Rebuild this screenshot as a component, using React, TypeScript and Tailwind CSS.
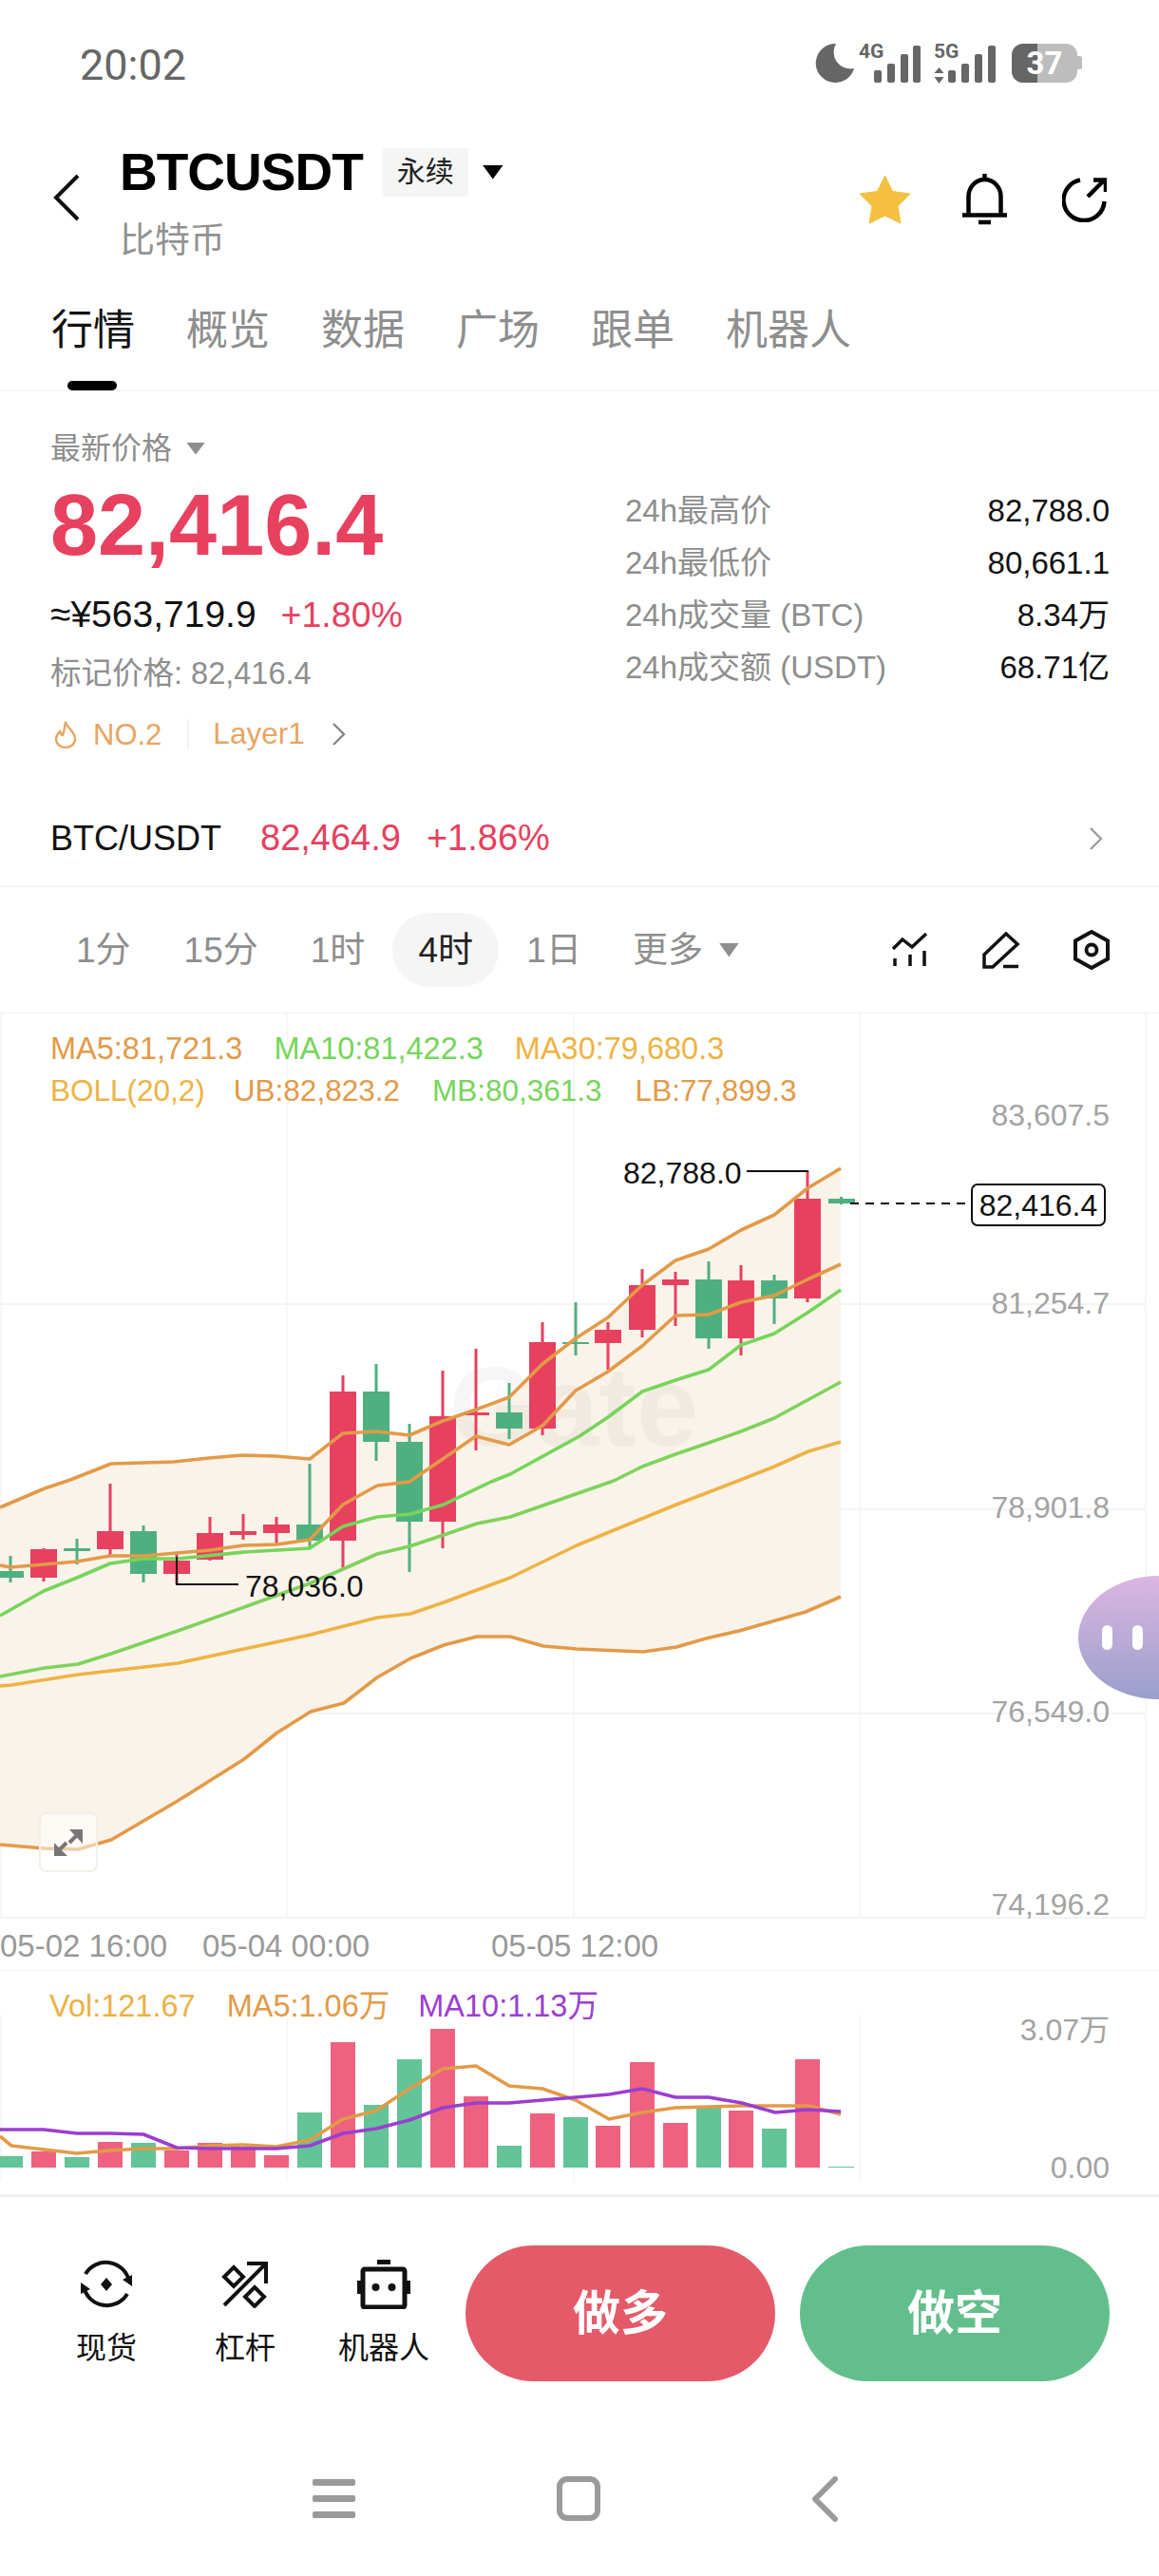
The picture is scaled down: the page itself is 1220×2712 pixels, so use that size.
import React from "react";

type Pt = [number, number];
// x, wick top, wick bottom, body top, body bottom, up/down
type Candle = [number, number, number, number, number, "r" | "g"];

const candles: Candle[] = [
  [11, 1639, 1667, 1655, 1662, "g"], [46, 1631, 1666, 1632, 1662, "r"], [81, 1621, 1648, 1631, 1634, "g"],
  [116, 1563, 1638, 1613, 1632, "r"], [151, 1607, 1667, 1613, 1658, "g"], [186, 1637, 1669, 1644, 1658, "r"],
  [221, 1598, 1644, 1615, 1643, "r"], [256, 1595, 1622, 1613, 1617, "r"], [291, 1598, 1626, 1606, 1615, "r"],
  [326, 1542, 1630, 1606, 1623, "g"], [361, 1449, 1652, 1466, 1623, "r"], [396, 1437, 1539, 1466, 1519, "g"],
  [431, 1500, 1656, 1519, 1603, "g"], [466, 1444, 1631, 1492, 1603, "r"], [501, 1421, 1528, 1488, 1491, "r"],
  [536, 1457, 1516, 1488, 1505, "g"], [571, 1393, 1512, 1414, 1505, "r"], [606, 1372, 1428, 1414, 1416, "g"],
  [640, 1393, 1443, 1401, 1415, "r"], [676, 1337, 1409, 1354, 1401, "r"], [711, 1340, 1397, 1348, 1354, "r"],
  [746, 1329, 1421, 1348, 1410, "g"], [780, 1333, 1428, 1349, 1410, "r"], [815, 1343, 1395, 1349, 1368, "g"],
  [850, 1234, 1372, 1263, 1368, "r"],
];

const upper: Pt[] = [[0, 1588], [47, 1568], [74, 1559], [117, 1542], [183, 1540], [220, 1536], [255, 1533], [290, 1534], [326, 1537], [361, 1510], [396, 1508], [431, 1512], [466, 1497], [501, 1485], [536, 1472], [571, 1437], [606, 1410], [640, 1388], [676, 1354], [711, 1328], [746, 1316], [780, 1296], [815, 1280], [850, 1252], [885, 1231]];
const lower: Pt[] = [[0, 1943], [47, 1947], [82, 1948], [117, 1938], [187, 1897], [257, 1853], [292, 1825], [327, 1803], [362, 1794], [397, 1767], [432, 1747], [467, 1733], [502, 1724], [537, 1724], [572, 1734], [607, 1737], [677, 1740], [712, 1735], [743, 1726], [778, 1718], [813, 1708], [848, 1698], [885, 1682]];
const ma5: Pt[] = [[0, 1649], [11, 1651], [46, 1648], [81, 1645], [116, 1639], [151, 1639], [186, 1636], [221, 1633], [256, 1628], [291, 1627], [326, 1622], [361, 1585], [397, 1565], [431, 1561], [466, 1537], [501, 1513], [536, 1522], [571, 1502], [606, 1465], [640, 1445], [676, 1418], [711, 1386], [746, 1385], [780, 1372], [815, 1365], [850, 1348], [885, 1332]];
const ma10: Pt[] = [[0, 1702], [46, 1676], [81, 1662], [116, 1647], [151, 1642], [187, 1642], [257, 1635], [326, 1631], [361, 1608], [397, 1598], [432, 1595], [467, 1585], [517, 1561], [537, 1553], [610, 1513], [640, 1493], [676, 1466], [711, 1454], [746, 1443], [780, 1417], [815, 1405], [850, 1383], [885, 1359]];
const mb: Pt[] = [[0, 1766], [47, 1757], [82, 1753], [117, 1742], [187, 1718], [257, 1693], [326, 1668], [361, 1653], [397, 1637], [431, 1629], [467, 1617], [502, 1605], [537, 1598], [646, 1560], [676, 1545], [711, 1532], [746, 1520], [780, 1508], [815, 1494], [885, 1456]];
const ma30: Pt[] = [[0, 1776], [12, 1775], [82, 1764], [117, 1760], [187, 1752], [257, 1737], [327, 1722], [362, 1713], [397, 1704], [432, 1700], [467, 1688], [537, 1662], [607, 1628], [712, 1585], [777, 1560], [815, 1545], [851, 1529], [885, 1519]];

// volume bars: x, top, colour
const volBars: [number, number, "r" | "g"][] = [
  [11, 2271, "g"], [46, 2266, "r"], [81, 2272, "g"], [116, 2256, "r"], [151, 2257, "g"], [186, 2265, "r"], [221, 2257, "r"],
  [256, 2261, "r"], [291, 2270, "r"], [326, 2225, "g"], [361, 2151, "r"], [396, 2217, "g"], [431, 2169, "g"], [466, 2137, "r"],
  [501, 2208, "r"], [536, 2260, "g"], [571, 2226, "r"], [606, 2230, "g"], [640, 2239, "r"], [676, 2172, "r"], [711, 2236, "r"],
  [746, 2220, "g"], [780, 2223, "r"], [815, 2242, "g"], [850, 2169, "r"],
];
const volMa5: Pt[] = [[0, 2250], [12, 2260], [46, 2264], [81, 2268], [116, 2265], [151, 2263], [186, 2263], [221, 2260], [256, 2259], [291, 2261], [326, 2254], [361, 2232], [396, 2223], [431, 2200], [466, 2179], [501, 2176], [536, 2197], [571, 2200], [606, 2212], [641, 2232], [676, 2225], [711, 2220], [746, 2219], [781, 2218], [816, 2218], [851, 2218], [885, 2227]];
const volMa10: Pt[] = [[0, 2243], [46, 2243], [81, 2247], [116, 2247], [151, 2248], [186, 2262], [221, 2263], [256, 2263], [291, 2263], [326, 2260], [361, 2247], [396, 2242], [431, 2233], [466, 2220], [501, 2215], [536, 2215], [571, 2212], [606, 2209], [641, 2206], [676, 2200], [711, 2209], [746, 2209], [781, 2215], [816, 2225], [851, 2222], [885, 2224]];

const pts = (l: Pt[]) => l.map((p) => p.join(",")).join(" ");
const red = "#e8405f";
const green = "#4fb07f";

function Line({ data, color, width = 3.6 }: { data: Pt[]; color: string; width?: number }) {
  return <polyline points={pts(data)} fill="none" stroke={color} strokeWidth={width} strokeLinejoin="round" />;
}

function Signal({ label, arrows }: { label: string; arrows?: boolean }) {
  return (
    <svg width="66" height="50" viewBox="0 -6 66 50" className="-mt-[6px] block">
      <text x="0" y="17" fontSize="21" fontWeight="700" fontFamily="Roboto, sans-serif" fill="#666">{label}</text>
      {arrows && <path d="M5.5 27 L10.5 33 H0.5 Z M5.5 44 L0.5 37 H10.5 Z" fill="#666" />}
      <rect x={arrows ? 15 : 16} y="30" width="8" height="13" rx="2" fill="#666" />
      <rect x={arrows ? 29 : 30} y="23" width="8" height="20" rx="2" fill="#666" />
      <rect x={arrows ? 43 : 44} y="13" width="8" height="30" rx="2" fill="#666" />
      <rect x={arrows ? 57 : 57} y="4" width="8" height="39" rx="2" fill="#666" />
    </svg>
  );
}

function StatusBar() {
  return (
    <div className="flex h-[136px] items-center justify-between pl-[84px] pr-[81px]">
      <span className="text-[45px] leading-none text-[#666] [font-family:Roboto,sans-serif]">20:02</span>
      <div className="-mt-[4px] flex items-center">
        <svg width="42" height="42" viewBox="0 0 42 42" className="block">
          <path d="M22 1 A20.5 20.5 0 1 0 41 27 A17.5 17.5 0 0 1 22 1 Z" fill="#666" />
        </svg>
        <div className="ml-[4px]"><Signal label="4G" /></div>
        <div className="ml-[13px]"><Signal label="5G" arrows /></div>
        <div className="relative ml-[16px] h-[41px] w-[69px] overflow-hidden rounded-[12px] bg-[#bdbdbd]">
          <div className="h-full w-[27px] bg-[#666]" />
          <span className="absolute inset-0 flex items-center justify-center text-[33px] font-bold leading-none text-white [font-family:Roboto,sans-serif]">37</span>
        </div>
        <div className="h-[14px] w-[5px] rounded-r-[2px] bg-[#bdbdbd]" />
      </div>
    </div>
  );
}

function Header() {
  return (
    <div className="flex h-[144px] items-center pr-[55px]">
      <svg width="30" height="50" viewBox="0 0 30 50" className="ml-[55px] block">
        <path d="M27 2 L4 25 L27 48" fill="none" stroke="#111" strokeWidth="4" />
      </svg>
      <div className="ml-[41px] mt-[20px] self-start">
        <div className="flex h-[50px] items-center">
          <span className="text-[55px] font-bold leading-none tracking-[-1px] text-black">BTCUSDT</span>
          <span className="ml-[21px] flex h-[51px] w-[90px] items-center justify-center bg-[#f5f5f5] text-[30px] leading-none text-[#222]">永续</span>
          <div className="ml-[15px] h-[15px] w-[22px] bg-black [clip-path:polygon(0_0,100%_0,50%_100%)]" />
        </div>
        <div className="mt-[29px] text-[37px] leading-[38px] text-[#929292]">比特币</div>
      </div>
      <div className="ml-auto mt-[3px] flex items-center">
        <svg width="55" height="52" viewBox="0 0 55 52" className="block">
          <path d="M27.5 1 L35.5 17.5 L54 20 L41 33 L44 51 L27.5 43 L11 51 L14 33 L1 20 L19.5 17.5 Z" fill="#f5c040" stroke="#f5c040" strokeWidth="1" strokeLinejoin="round" />
        </svg>
        <svg width="47" height="54" viewBox="0 0 47 54" className="ml-[54px] block">
          <path d="M6.5 42 V24 A17 18 0 0 1 40.5 24 V42" fill="none" stroke="#000" strokeWidth="4.5" />
          <path d="M0 43.5 H47 M23.5 0 V6 M17 51 H30" fill="none" stroke="#000" strokeWidth="4.5" />
        </svg>
        <svg width="47" height="48" viewBox="0 0 47 48" className="ml-[58px] block">
          <path d="M19 3.5 A21.5 21.5 0 1 0 44.5 26" fill="none" stroke="#000" strokeWidth="4.5" />
          <path d="M27 21 L44 4 M33 3.5 H46 V16" fill="none" stroke="#000" strokeWidth="4.5" />
        </svg>
      </div>
    </div>
  );
}

function Tabs() {
  return (
    <div className="h-[132px] border-b border-[#f0f0f0] pl-[54px] pt-[46px]">
      <div className="flex gap-[54px] text-[44px] leading-[44px] text-[#8e8e8e]">
        <span className="text-[#111]">行情</span>
        <span>概览</span>
        <span>数据</span>
        <span>广场</span>
        <span>跟单</span>
        <span>机器人</span>
      </div>
      <div className="ml-[17px] mt-[31px] h-[10px] w-[52px] rounded-full bg-black" />
    </div>
  );
}

function StatRow({ label, value }: { label: string; value: string }) {
  return (
    <div className="mb-[15px] flex h-[40px] items-center justify-between text-[33px] leading-none">
      <span className="text-[#8e8e8e]">{label}</span>
      <span className="text-[#111]">{value}</span>
    </div>
  );
}

function Summary() {
  return (
    <div className="flex">
      <div className="w-[658px] pl-[53px] pt-[44px]">
        <div className="flex items-center text-[32px] leading-[32px] text-[#8e8e8e]">
          <span>最新价格</span>
          <div className="ml-[15px] h-[13px] w-[20px] bg-[#8e8e8e] [clip-path:polygon(0_0,100%_0,50%_100%)]" />
        </div>
        <div className="mt-[20px] text-[90px] font-bold leading-[90px] text-[#e8405f]">82,416.4</div>
        <div className="mt-[29px] flex items-center leading-[40px]">
          <span className="text-[39px] text-[#111]">≈¥563,719.9</span>
          <span className="ml-[26px] text-[37.5px] text-[#e8405f]">+1.80%</span>
        </div>
        <div className="mt-[26px] text-[32.5px] leading-[32px] text-[#8e8e8e]">标记价格: 82,416.4</div>
        <div className="mt-[31px] flex h-[34px] items-center text-[31px] leading-none text-[#e8a562]">
          <svg width="26" height="30" viewBox="0 0 26 30" className="ml-[3px] block">
            <path d="M13 2 C14 8 23 12 23 20 A10 9 0 0 1 3 20 C3 16 5 14 7 12 C8 15 9 16 10 16 C12 11 12 6 13 2 Z" fill="none" stroke="#e8a562" strokeWidth="2.4" />
          </svg>
          <span className="ml-[16px]">NO.2</span>
          <div className="ml-[27px] h-[32px] w-[2px] bg-[#f2f2f2]" />
          <span className="ml-[25px] text-[31.5px]">Layer1</span>
          <svg width="16" height="26" viewBox="0 0 16 26" className="ml-[28px] block">
            <path d="M2 2 L13 13 L2 24" fill="none" stroke="#888" strokeWidth="2.4" />
          </svg>
        </div>
      </div>
      <div className="flex-1 pr-[52px] pt-[105px]">
        <StatRow label="24h最高价" value="82,788.0" />
        <StatRow label="24h最低价" value="80,661.1" />
        <StatRow label="24h成交量 (BTC)" value="8.34万" />
        <StatRow label="24h成交额 (USDT)" value="68.71亿" />
      </div>
    </div>
  );
}

function SpotRow() {
  return (
    <div className="mt-[40px] flex h-[104px] items-center border-b border-[#f0f0f0] pl-[53px] pr-[58px] pt-[2px]">
      <span className="text-[36px] text-[#111]">BTC/USDT</span>
      <span className="ml-[41px] text-[38px] text-[#e8405f]">82,464.9</span>
      <span className="ml-[27px] text-[38px] text-[#e8405f]">+1.86%</span>
      <svg width="17" height="26" viewBox="0 0 17 26" className="ml-auto block">
        <path d="M3 2 L14 13 L3 24" fill="none" stroke="#999" strokeWidth="2.2" />
      </svg>
    </div>
  );
}

function Intervals() {
  return (
    <div className="flex h-[133px] items-center border-b border-[#f0f0f0] pl-[80px] pr-[51px] text-[37px] leading-none text-[#8e8e8e]">
      <span>1分</span>
      <span className="ml-[56px]">15分</span>
      <span className="ml-[55px]">1时</span>
      <span className="ml-[29px] flex h-[78px] w-[112px] items-center justify-center rounded-full bg-[#f5f5f5] text-[#222]">4时</span>
      <span className="ml-[29px]">1日</span>
      <span className="ml-[54px]">更多</span>
      <div className="ml-[17px] h-[15px] w-[21px] bg-[#8e8e8e] [clip-path:polygon(0_0,100%_0,50%_100%)]" />
      <div className="ml-auto flex items-center">
        <svg width="38" height="36" viewBox="0 0 38 36" className="block">
          <path d="M1 17 L11 7 L21 15 L36 1 M3 27 V35 M19 23 V35 M34 19 V35" fill="none" stroke="#111" strokeWidth="3.5" />
        </svg>
        <svg width="40" height="39" viewBox="0 0 40 39" className="ml-[57px] block">
          <path d="M25 2 L37 13 L11 37 H2 V24 Z M22 36.5 H38" fill="none" stroke="#111" strokeWidth="3.5" />
        </svg>
        <svg width="40" height="42" viewBox="0 0 40 42" className="ml-[55px] block">
          <path d="M20 2 L37 11.5 V30.5 L20 40 L3 30.5 V11.5 Z" fill="none" stroke="#111" strokeWidth="4" />
          <circle cx="20" cy="21" r="5.5" fill="none" stroke="#111" strokeWidth="3.8" />
        </svg>
      </div>
    </div>
  );
}

function Candles() {
  return (
    <svg width="1220" height="1007" viewBox="0 1068 1220 1007" className="absolute inset-0 block">
      {[1374, 1590, 1805, 2020].map((y) => <line key={y} x1="0" x2="1206" y1={y} y2={y} stroke="#f1f1f1" strokeWidth="1.5" />)}
      {[1, 302, 604, 905, 1206].map((x) => <line key={x} x1={x} x2={x} y1="1068" y2="2020" stroke="#f5f5f5" strokeWidth="1.5" />)}
      <polygon points={pts([...upper, ...[...lower].reverse()])} fill="#faf3ea" />
      <text x="473" y="1523" fontSize="118" fontWeight="700" fontFamily="Liberation Sans, sans-serif" fill="#000" fillOpacity="0.035">Gate</text>
      {candles.map(([x, wt, wb, bt, bb, c]) => (
        <g key={x} fill={c === "r" ? red : green}>
          <rect x={x - 1.5} y={wt} width="3" height={wb - wt} />
          <rect x={x - 14} y={bt} width="28" height={bb - bt} />
        </g>
      ))}
      <rect x="872" y="1263" width="28" height="5" fill={green} />
      <rect x="884" y="1261" width="3" height="8" fill={green} />
      <Line data={mb} color="#7fd25a" />
      <Line data={ma10} color="#76d55a" />
      <Line data={ma30} color="#eeb344" />
      <Line data={upper} color="#e39a47" />
      <Line data={lower} color="#e39a47" />
      <Line data={ma5} color="#e39a47" />
      <path d="M786 1234 H851 M186 1640 V1669 H251" fill="none" stroke="#111" strokeWidth="1.8" />
      <path d="M895 1268 H1022" fill="none" stroke="#111" strokeWidth="1.8" strokeDasharray="9 7" />
    </svg>
  );
}

function PriceChart() {
  return (
    <div className="relative h-[1008px] border-b border-[#f0f0f0]">
      <Candles />
      <div className="absolute left-[53px] top-[21px] flex flex-col gap-[12px] leading-[32px]">
        <div className="flex gap-[33px] text-[32.5px]">
          <span className="text-[#e39a47]">MA5:81,721.3</span>
          <span className="text-[#76d55a]">MA10:81,422.3</span>
          <span className="text-[#eeb344]">MA30:79,680.3</span>
        </div>
        <div className="flex text-[31.5px]">
          <span className="text-[#eeb344]">BOLL(20,2)</span>
          <span className="ml-[30px] text-[#e39a47]">UB:82,823.2</span>
          <span className="ml-[34px] text-[#76d55a]">MB:80,361.3</span>
          <span className="ml-[35px] text-[#e39a47]">LB:77,899.3</span>
        </div>
      </div>

      <span className="absolute right-[52px] top-[92px] text-[32px] leading-[31px] text-[#a3a3a3]">83,607.5</span>
      <span className="absolute right-[52px] top-[290px] text-[32px] leading-[31px] text-[#a3a3a3]">81,254.7</span>
      <span className="absolute right-[52px] top-[505px] text-[32px] leading-[31px] text-[#a3a3a3]">78,901.8</span>
      <span className="absolute right-[52px] top-[720px] text-[32px] leading-[31px] text-[#a3a3a3]">76,549.0</span>
      <span className="absolute right-[52px] top-[923px] text-[32px] leading-[31px] text-[#a3a3a3]">74,196.2</span>

      <span className="absolute left-[656px] top-[152px] text-[32px] leading-[32px] text-[#111]">82,788.0</span>
      <span className="absolute left-[258px] top-[587px] text-[32px] leading-[32px] text-[#111]">78,036.0</span>
      <span className="absolute left-[1022px] top-[179px] flex h-[45px] w-[142px] items-center justify-center rounded-[7px] border-2 border-[#111] bg-white text-[32px] leading-none text-[#111]">82,416.4</span>

      <div className="absolute left-[41px] top-[841px] flex h-[63px] w-[62px] items-center justify-center rounded-[8px] border-2 border-[#f3eee8] bg-white/50">
        <svg width="32" height="30" viewBox="0 0 32 30" className="block">
          <path d="M17 1 H31 V16 Z M1 15 V29 H15 Z" fill="#777" />
          <path d="M24 8 L17 15 M7 22 L14 15" fill="none" stroke="#777" strokeWidth="4" />
        </svg>
      </div>

      <span className="absolute left-0 top-[965px] text-[33px] leading-[33px] text-[#999]">05-02 16:00</span>
      <span className="absolute left-[213px] top-[965px] text-[33px] leading-[33px] text-[#999]">05-04 00:00</span>
      <span className="absolute left-[517px] top-[965px] text-[33px] leading-[33px] text-[#999]">05-05 12:00</span>

      <div className="absolute right-0 top-[592px] flex h-[130px] w-[85px] items-center gap-[21px] rounded-[85px_0_0_85px/65px_0_0_65px] bg-gradient-to-b from-[#dcb6e2] to-[#9a9fcb] pl-[25px]">
        <div className="h-[26px] w-[11px] rounded-full bg-white" />
        <div className="h-[26px] w-[11px] rounded-full bg-white" />
      </div>
    </div>
  );
}

function VolumeChart() {
  return (
    <div className="relative h-[238px] border-b-[3px] border-[#f0f0f0]">
      <svg width="1220" height="235" viewBox="0 2076 1220 235" className="absolute inset-0 block">
        {[1, 302, 604, 905].map((x) => <line key={x} x1={x} x2={x} y1="2122" y2="2298" stroke="#f5f5f5" strokeWidth="1.5" />)}
        {volBars.map(([x, top, c]) => (
          <rect key={x} x={x - 13} y={top} width="26" height={2283 - top} fill={c === "r" ? "#ee6280" : "#62c497"} />
        ))}
        <rect x="872" y="2282" width="27" height="1" fill="#62c497" />
        <Line data={volMa5} color="#e39a47" />
        <Line data={volMa10} color="#9b3ed0" />
      </svg>
      <div className="absolute left-[52px] top-[22px] flex text-[32.5px] leading-[31px]">
        <span className="text-[#ecb144]">Vol:121.67</span>
        <span className="ml-[33px] text-[#e39a47]">MA5:1.06万</span>
        <span className="ml-[30px] text-[#9b3ed0]">MA10:1.13万</span>
      </div>
      <span className="absolute right-[52px] top-[47px] text-[32px] leading-[31px] text-[#a3a3a3]">3.07万</span>
      <span className="absolute right-[52px] top-[192px] text-[32px] leading-[31px] text-[#a3a3a3]">0.00</span>
    </div>
  );
}

function ActionItem({ icon, label }: { icon: React.ReactNode; label: string }) {
  return (
    <div className="flex w-[146px] flex-col items-center">
      <div className="mt-[13px] flex h-[56px] items-center">{icon}</div>
      <span className="mt-[23px] text-[32px] leading-[32px] text-[#111]">{label}</span>
    </div>
  );
}

function ActionBar() {
  return (
    <div className="flex h-[229px] items-start pl-[39px] pr-[52px] pt-[51px]">
      <ActionItem
        label="现货"
        icon={
          <svg width="56" height="56" viewBox="0 0 56 56" className="block">
            <path d="M6 17 A25 25 0 0 1 52 25 M50 38 A25 25 0 0 1 4 30" fill="none" stroke="#111" strokeWidth="4" />
            <path d="M45 23 L55 18 L55 30 Z M11 33 L1 38 L1 26 Z" fill="#111" />
            <path d="M28 21 L34 28 L28 35 L22 28 Z" fill="#111" />
          </svg>
        }
      />
      <ActionItem
        label="杠杆"
        icon={
          <svg width="52" height="50" viewBox="0 0 52 50" className="block">
            <path d="M4 47 L48 3 M28 3 H48 V24" fill="none" stroke="#111" strokeWidth="4" />
            <path d="M14 7 L24 17 L14 27 L4 17 Z M36 28 L46 38 L36 48 L26 38 Z" fill="none" stroke="#111" strokeWidth="4" />
          </svg>
        }
      />
      <ActionItem
        label="机器人"
        icon={
          <svg width="56" height="52" viewBox="0 0 56 52" className="block">
            <rect x="6" y="10" width="44" height="40" rx="2" fill="none" stroke="#111" strokeWidth="5" />
            <rect x="21" y="0" width="14" height="5" fill="#111" />
            <rect x="0" y="22" width="4" height="14" fill="#111" />
            <rect x="52" y="22" width="4" height="14" fill="#111" />
            <circle cx="19.5" cy="29" r="4" fill="#111" />
            <circle cx="36.5" cy="29" r="4" fill="#111" />
          </svg>
        }
      />
      <div className="ml-[13px] flex h-[143px] w-[326px] items-center justify-center rounded-full bg-[#e55a68] text-[50px] font-bold leading-none text-white">做多</div>
      <div className="ml-[26px] flex h-[143px] w-[326px] items-center justify-center rounded-full bg-[#62bf8c] text-[50px] font-bold leading-none text-white">做空</div>
    </div>
  );
}

function NavBar() {
  return (
    <div className="flex h-[167px] items-start pl-[329px] pt-[65px]">
      <div className="flex h-[47px] w-[45px] flex-col justify-between py-[3px]">
        <div className="h-[7px] rounded-[2px] bg-[#9a9a9a]" />
        <div className="h-[7px] rounded-[2px] bg-[#9a9a9a]" />
        <div className="h-[7px] rounded-[2px] bg-[#9a9a9a]" />
      </div>
      <div className="ml-[212px] h-[47px] w-[46px] rounded-[11px] border-[6px] border-[#9a9a9a]" />
      <svg width="30" height="48" viewBox="0 0 30 48" className="ml-[221px] block">
        <path d="M26 3 L5 24 L26 45" fill="none" stroke="#9a9a9a" strokeWidth="6" strokeLinecap="round" strokeLinejoin="round" />
      </svg>
    </div>
  );
}

export default function App() {
  return (
    <div className="h-[2712px] w-[1220px] overflow-hidden bg-white [font-family:'Liberation_Sans','Noto_Sans_CJK_SC',sans-serif]">
      <StatusBar />
      <Header />
      <Tabs />
      <Summary />
      <SpotRow />
      <Intervals />
      <PriceChart />
      <VolumeChart />
      <ActionBar />
      <NavBar />
    </div>
  );
}
